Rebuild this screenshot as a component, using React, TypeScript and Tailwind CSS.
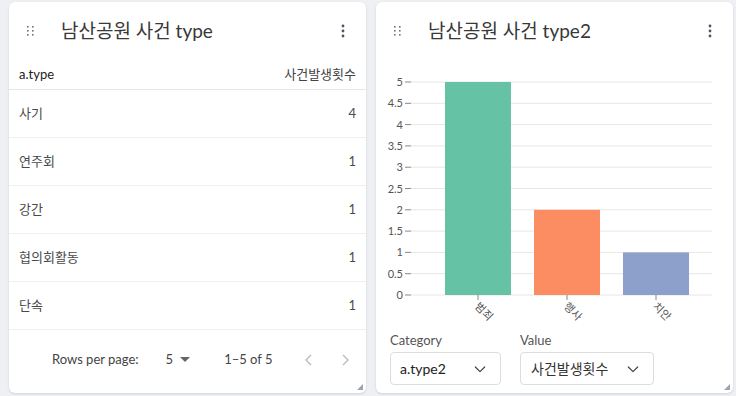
import React from 'react'

const rows = [
  { type: '사기', count: 4 },
  { type: '연주회', count: 1 },
  { type: '강간', count: 1 },
  { type: '협의회활동', count: 1 },
  { type: '단속', count: 1 },
]

const bars = [
  { label: '범죄', value: 5, color: '#66c2a5', x: 69 },
  { label: '행사', value: 2, color: '#fc8d62', x: 158 },
  { label: '치안', value: 1, color: '#8da0cb', x: 247 },
]

function DragHandle() {
  return (
    <svg width="8" height="10" viewBox="0 0 8 10" className="text-gray-500">
      {[0, 4, 8].map((y) =>
        [1, 6].map((x) => <rect key={`${x}-${y}`} x={x} y={y} width="1.6" height="1.6" fill="currentColor" />)
      )}
    </svg>
  )
}

function Kebab() {
  return (
    <svg width="4" height="14" viewBox="0 0 4 14" className="text-gray-600">
      <circle cx="2" cy="2" r="1.4" fill="currentColor" />
      <circle cx="2" cy="7" r="1.4" fill="currentColor" />
      <circle cx="2" cy="12" r="1.4" fill="currentColor" />
    </svg>
  )
}

function ResizeHandle() {
  return (
    <svg width="6" height="6" viewBox="0 0 6 6" className="absolute right-[3px] bottom-[3px]">
      <path d="M6 0V6H0Z" fill="#9ca3af" />
    </svg>
  )
}

function Chevron() {
  return (
    <svg width="16" height="16" viewBox="0 0 24 24" fill="none" stroke="#444" strokeWidth={1.8} strokeLinecap="round" strokeLinejoin="round">
      <path d="M5 9l7 7 7-7" />
    </svg>
  )
}

function Header({ title }: { title: string }) {
  return (
    <div className="flex items-center h-[58px] pl-[17px] pr-[21px]">
      <DragHandle />
      <span className="ml-[27px] text-[19px] text-[#383838] flex-1">{title}</span>
      <Kebab />
    </div>
  )
}

function Chart() {
  const top = 22
  const zero = 235
  const step = (zero - top) / 10
  const ticks = Array.from({ length: 11 }, (_, i) => i * 0.5)
  return (
    <svg width="357" height="272" viewBox="0 0 357 272" className="block">
      {ticks.map((t) => {
        const y = zero - t * 2 * step
        return (
          <g key={t}>
            <line x1="35" x2="336" y1={y} y2={y} stroke="#e6e6e6" strokeWidth="1" />
            <line x1="29" x2="35" y1={y} y2={y} stroke="#888" strokeWidth="1" />
            <text x="27" y={y + 4} textAnchor="end" fontSize="11" fill="#555">
              {t}
            </text>
          </g>
        )
      })}
      {bars.map((b) => {
        const h = b.value * 2 * step
        const cx = b.x + 33
        return (
          <g key={b.label}>
            <rect x={b.x} y={zero - h} width="66" height={h} fill={b.color} />
            <line x1={cx} x2={cx} y1={zero} y2={zero + 5} stroke="#888" />
            <text
              x={cx - 4}
              y={zero + 12}
              fontSize="11"
              fill="#555"
              transform={`rotate(45 ${cx - 4} ${zero + 12})`}
            >
              {b.label}
            </text>
          </g>
        )
      })}
    </svg>
  )
}

export default function App() {
  return (
    <div
      className="w-[736px] h-[396px] bg-[#eef0f4] flex gap-[10px] pl-[9px] pt-[2px]"
      style={{ fontFamily: 'Lato, "Noto Sans CJK KR", sans-serif' }}
    >
      {/* table card */}
      <div className="relative w-[357px] h-[391px] bg-white rounded-[6px] shadow-sm flex flex-col">
        <Header title="남산공원 사건 type" />
        <div className="flex items-center justify-between h-[30px] px-[10px] border-b border-[#e6e6e6] text-[13px] text-[#222]">
          <span>a.type</span>
          <span className="text-[#444]">사건발생횟수</span>
        </div>
        {rows.map((r) => (
          <div
            key={r.type}
            className="flex items-center justify-between h-[48px] px-[10px] border-b border-[#f0f0f0] text-[13px] text-[#4a4a4a]"
          >
            <span>{r.type}</span>
            <span>{r.count}</span>
          </div>
        ))}
        <div className="flex items-center h-[60px] text-[13px] text-[#444] pl-[43px]">
          <span>Rows per page:</span>
          <span className="ml-[27px]">5</span>
          <svg width="10" height="6" viewBox="0 0 10 6" className="ml-[7px]">
            <path d="M0 0h10L5 5z" fill="#666" />
          </svg>
          <span className="ml-[34px]">1–5 of 5</span>
          <svg width="10" height="14" viewBox="0 0 10 14" className="ml-[31px]" fill="none" stroke="#bbb" strokeWidth="1.4">
            <path d="M7 2L2 7l5 5" />
          </svg>
          <svg width="10" height="14" viewBox="0 0 10 14" className="ml-[26px]" fill="none" stroke="#bbb" strokeWidth="1.4">
            <path d="M3 2l5 5-5 5" />
          </svg>
        </div>
        <ResizeHandle />
      </div>

      {/* chart card */}
      <div className="relative w-[357px] h-[391px] bg-white rounded-[6px] shadow-sm flex flex-col">
        <Header title="남산공원 사건 type2" />
        <Chart />
        <div className="flex gap-[19px] pl-[14px]">
          <div className="flex flex-col">
            <span className="text-[13px] text-[#555] leading-[16px] mb-[4px]">Category</span>
            <div className="flex items-center justify-between w-[111px] h-[33px] border border-[#ddd] rounded-[4px] pl-[9px] pr-[12px] text-[14px] text-[#222]">
              <span>a.type2</span>
              <Chevron />
            </div>
          </div>
          <div className="flex flex-col">
            <span className="text-[13px] text-[#555] leading-[16px] mb-[4px]">Value</span>
            <div className="flex items-center justify-between w-[134px] h-[33px] border border-[#ddd] rounded-[4px] pl-[10px] pr-[12px] text-[14px] text-[#333]">
              <span>사건발생횟수</span>
              <Chevron />
            </div>
          </div>
        </div>
        <ResizeHandle />
      </div>
    </div>
  )
}
